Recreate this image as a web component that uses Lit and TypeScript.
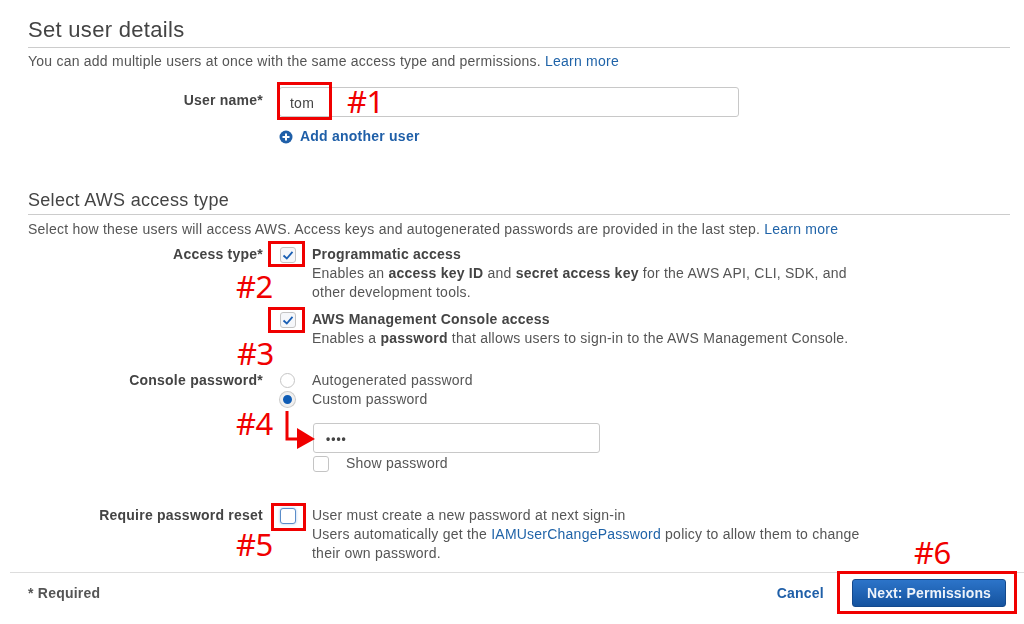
import {LitElement, html, css, svg} from 'lit';
import {customElement} from 'lit/decorators.js';

const notes = [
  {label: '#1', x: 347, y: 81},
  {label: '#2', x: 236, y: 266},
  {label: '#3', x: 237, y: 333},
  {label: '#4', x: 236, y: 403},
  {label: '#5', x: 236, y: 524},
  {label: '#6', x: 914, y: 532},
];

const boxes = [
  {x: 277, y: 82, w: 55, h: 38},
  {x: 268, y: 241, w: 37, h: 26},
  {x: 268, y: 307, w: 37, h: 26},
  {x: 271, y: 503, w: 35, h: 28},
  {x: 837, y: 571, w: 180, h: 43},
];

const check = svg`<path d="M3.5 8.5 L6.8 11.5 L12.5 4.8" fill="none" stroke="#1a5fb4" stroke-width="1.8"/>`;

@customElement('app-root')
export class AppRoot extends LitElement {
  static styles = css`
    :host {
      display: block;
      position: relative;
      width: 1024px;
      height: 624px;
      overflow: hidden;
      background: #fff;
      font-family: 'Liberation Sans', Arial, sans-serif;
      font-size: 14px;
      letter-spacing: 0.23px;
      color: #555;
    }

    .page {
      padding: 18px 14px 0 28px;
      filter: blur(0.45px);
    }

    h2 {
      margin: 0;
      padding-bottom: 5px;
      border-bottom: 1px solid #ccc;
      font-size: 22px;
      letter-spacing: 0.3px;
      line-height: 24px;
      font-weight: 400;
      color: #444;
    }

    h3 {
      margin: 0;
      padding-bottom: 4px;
      border-bottom: 1px solid #ccc;
      font-size: 18px;
      letter-spacing: 0.3px;
      line-height: 20px;
      font-weight: 400;
      color: #444;
    }

    p {
      margin: 0;
      line-height: 19px;
    }

    .intro {
      margin-top: 4px;
    }

    .type-intro {
      margin-top: 5px;
    }

    a {
      color: #1f63a8;
    }

    b {
      color: #444;
    }

    .row {
      display: grid;
      grid-template-columns: 235px 1fr;
      column-gap: 16px;
    }

    .label {
      text-align: right;
      font-weight: 700;
      color: #444;
      line-height: 19px;
    }

    .field {
      display: block;
      box-sizing: border-box;
      height: 30px;
      border: 1px solid #c8c8c8;
      border-radius: 3px;
      padding: 0 10px;
      line-height: 30px;
      color: #444;
    }

    .user-row {
      margin-top: 16px;
    }

    .user-row .label {
      padding-top: 4px;
    }

    .user-row .field {
      width: 460px;
    }

    .add {
      display: flex;
      align-items: center;
      gap: 7px;
      margin-top: 10px;
      font-weight: 700;
      color: #1f5fa8;
      line-height: 19px;
    }

    .type-head {
      margin-top: 44px;
    }

    .opt {
      display: grid;
      grid-template-columns: 16px 1fr;
      column-gap: 16px;
      margin-left: 1px;
    }

    .tick {
      box-sizing: border-box;
      width: 16px;
      height: 16px;
      margin-top: 2px;
      border: 1px solid #c4c4c4;
      border-radius: 3px;
      background: #f5f7fa;
    }

    .tick svg {
      display: block;
      margin: -1px;
    }

    .focus {
      border: 1.5px solid #5b8dc9;
      box-shadow: 0 0 3px #a9c8ee;
      background: #fff;
    }

    .radio {
      box-sizing: border-box;
      width: 15px;
      height: 15px;
      margin-top: 2px;
      border: 1px solid #c4c4c4;
      border-radius: 50%;
      background: #fff;
    }

    .radio.on {
      border: 3px solid #f0f0f0;
      background: #0f5cb5;
      box-shadow: 0 0 0 1px #ccc;
    }

    .access {
      margin-top: 6px;
    }

    .second {
      margin-top: 8px;
    }

    .password {
      margin-top: 23px;
    }

    .password-box {
      width: 287px;
      margin: 14px 0 0 34px;
      padding-left: 12px;
      font-weight: 700;
      letter-spacing: 1px;
      font-size: 12px;
    }

    .show {
      display: flex;
      gap: 17px;
      margin: 1px 0 0 34px;
    }

    .show .tick {
      background: #fff;
    }

    .reset {
      margin-top: 33px;
    }

    .foot {
      position: absolute;
      left: 10px;
      right: 0;
      top: 572px;
      display: flex;
      align-items: center;
      height: 39px;
      padding: 0 18px;
      border-top: 1px solid #ddd;
      filter: blur(0.45px);
    }

    .required {
      flex: 1;
      font-weight: 700;
      color: #555;
    }

    .cancel {
      font-weight: 700;
      color: #1f5fa8;
      margin-right: 28px;
    }

    .next {
      width: 154px;
      height: 28px;
      border: 1px solid #14498c;
      border-radius: 3px;
      background: linear-gradient(#2c74c9, #15539f);
      color: #eef3fa;
      font: 700 14px 'Liberation Sans', Arial, sans-serif;
      letter-spacing: 0.1px;
    }

    .mark {
      position: absolute;
      box-sizing: border-box;
      border: 3px solid #f00000;
    }

    .note {
      position: absolute;
      font-family: 'Noto Sans', sans-serif;
      font-size: 31px;
      letter-spacing: -0.5px;
      line-height: 40px;
      color: #f00000;
    }

    .arrow {
      position: absolute;
      left: 280px;
      top: 408px;
    }
  `;

  private tick(on: boolean) {
    return html`<div class="tick">
      ${on
        ? html`<svg width="16" height="16" viewBox="0 0 16 16">${check}</svg>`
        : ''}
    </div>`;
  }

  render() {
    return html`
      <div class="page">
        <h2>Set user details</h2>
        <p class="intro">
          You can add multiple users at once with the same access type and
          permissions. <a>Learn more</a>
        </p>
        <div class="row user-row">
          <div class="label">User name*</div>
          <div>
            <div class="field">tom</div>
            <div class="add">
              <svg width="14" height="14" viewBox="0 0 14 14">
                <circle cx="7" cy="7" r="6.5" fill="#1f5fa8" />
                <path d="M3.5 7h7M7 3.5v7" stroke="#fff" stroke-width="2" />
              </svg>
              Add another user
            </div>
          </div>
        </div>

        <h3 class="type-head">Select AWS access type</h3>
        <p class="type-intro">
          Select how these users will access AWS. Access keys and autogenerated
          passwords are provided in the last step. <a>Learn more</a>
        </p>

        <div class="row access">
          <div class="label">Access type*</div>
          <div>
            <div class="opt">
              ${this.tick(true)}
              <p>
                <b>Programmatic access</b><br />
                Enables an <b>access key ID</b> and <b>secret access key</b> for
                the AWS API, CLI, SDK, and<br />
                other development tools.
              </p>
            </div>
            <div class="opt second">
              ${this.tick(true)}
              <p>
                <b>AWS Management Console access</b><br />
                Enables a <b>password</b> that allows users to sign-in to the
                AWS Management Console.
              </p>
            </div>
          </div>
        </div>

        <div class="row password">
          <div class="label">Console password*</div>
          <div>
            <div class="opt">
              <div class="radio"></div>
              <p>Autogenerated password</p>
            </div>
            <div class="opt">
              <div class="radio on"></div>
              <p>Custom password</p>
            </div>
            <div class="field password-box">••••</div>
            <div class="show">
              <div class="tick"></div>
              <p>Show password</p>
            </div>
          </div>
        </div>

        <div class="row reset">
          <div class="label">Require password reset</div>
          <div class="opt">
            <div class="tick focus"></div>
            <p>
              User must create a new password at next sign-in<br />
              Users automatically get the <a>IAMUserChangePassword</a> policy to
              allow them to change<br />
              their own password.
            </p>
          </div>
        </div>
      </div>

      <div class="foot">
        <div class="required">* Required</div>
        <div class="cancel">Cancel</div>
        <button class="next">Next: Permissions</button>
      </div>

      ${boxes.map(
        (b) =>
          html`<div
            class="mark"
            style="left:${b.x}px;top:${b.y}px;width:${b.w}px;height:${b.h}px"
          ></div>`
      )}
      ${notes.map(
        (n) =>
          html`<div class="note" style="left:${n.x}px;top:${n.y}px">
            ${n.label}
          </div>`
      )}
      <svg class="arrow" width="40" height="44" viewBox="0 0 40 44">
        <path d="M7 3v28h12" fill="none" stroke="#f00000" stroke-width="3" />
        <path d="M17 20l18 11-18 10z" fill="#f00000" />
      </svg>
    `;
  }
}
